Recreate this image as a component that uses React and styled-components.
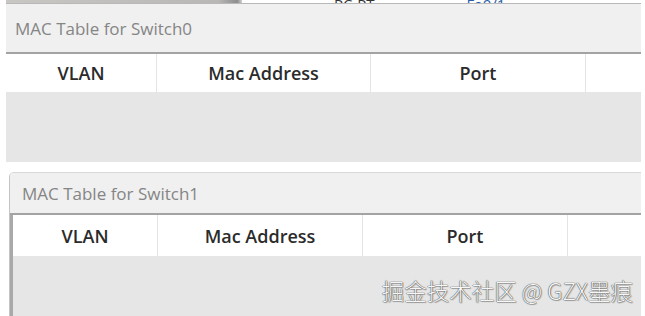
import React from "react";
import styled, { createGlobalStyle } from "styled-components";

const GlobalStyle = createGlobalStyle`
  html, body {
    margin: 0;
    padding: 0;
    background: #ffffff;
  }
  body {
    font-family: "Open Sans", "Noto Sans", "Noto Sans CJK SC", sans-serif;
    width: 645px;
    height: 316px;
    overflow: hidden;
  }
`;

const Page = styled.div`
  display: flex;
  flex-direction: column;
  width: 645px;
  height: 316px;
  overflow: hidden;
`;

const TopStrip = styled.div`
  display: flex;
  align-items: flex-end;
  height: 5px;
  overflow: hidden;
  padding-left: 6px;
`;

const Scrollbar = styled.div`
  width: 236px;
  height: 4px;
  background: linear-gradient(to right, #c9c7c4, #b9b7b5 90%, #8e8e8e 98%, #d0d0d0);
`;

const Cut = styled.span`
  font-family: "Open Sans", sans-serif;
  font-size: 15px;
  line-height: 15px;
  margin-bottom: -9px;
  margin-left: ${p => p.$left}px;
  color: ${p => p.$color};
  white-space: nowrap;
`;

const Panel = styled.div`
  display: flex;
  flex-direction: column;
  margin-left: ${p => p.$left}px;
  margin-right: 4px;
  margin-top: ${p => p.$top}px;
  height: ${p => p.$height}px;
  flex-shrink: 0;
  border-left: ${p => (p.$framed ? "1px solid #c4c4c4" : "none")};
  border-top: ${p => (p.$framed ? "1px solid #d8d8d8" : "1px solid #b8b8b8")};
  border-top-left-radius: ${p => (p.$framed ? "5px" : "0")};
  overflow: hidden;
`;

const Title = styled.div`
  height: ${p => p.$height}px;
  display: flex;
  align-items: center;
  padding-left: ${p => p.$pad}px;
  background: #f0f0f0;
  color: #858585;
  font-size: 17px;
  border-bottom: 2px solid #a3a3a3;
  flex-shrink: 0;
`;

const Body = styled.div`
  position: relative;
  flex: 1;
  display: flex;
  flex-direction: column;
  border-left: ${p => (p.$framed ? "3px solid #a9a9a9" : "none")};
  background: #e6e6e6;
`;

const HeaderRow = styled.div`
  display: grid;
  grid-template-columns: ${p => p.$cols};
  height: ${p => p.$height}px;
  background: #ffffff;
  flex-shrink: 0;
`;

const HeaderCell = styled.div`
  display: flex;
  align-items: center;
  justify-content: center;
  border-right: 1px solid #e4e4e4;
  color: #2b2b2b;
  font-size: 18px;
  font-weight: 600;
  &:last-child {
    border-right: none;
  }
`;

const Watermark = styled.div`
  position: absolute;
  right: 8px;
  bottom: 10px;
  font-family: "Noto Sans CJK SC", "Open Sans", sans-serif;
  font-size: 22.5px;
  font-weight: 300;
  color: #f6f6f6;
  text-shadow: 0 0 1px #444, 0 0 1px #444, 1px 1px 1px rgba(0, 0, 0, 0.25);
  white-space: nowrap;
`;

const columns = ["VLAN", "Mac Address", "Port", ""];

const MacTable = ({ name, left, top, height, framed, titleHeight, titlePad, cols, headerHeight, children }) => (
  <Panel $left={left} $top={top} $height={height} $framed={framed}>
    <Title $height={titleHeight} $pad={titlePad}>MAC Table for {name}</Title>
    <Body $framed={framed}>
      <HeaderRow $cols={cols} $height={headerHeight}>
        {columns.map((c, i) => (
          <HeaderCell key={i}>{c}</HeaderCell>
        ))}
      </HeaderRow>
      {children}
    </Body>
  </Panel>
);

export default function App() {
  return (
    <Page>
      <GlobalStyle />
      <TopStrip>
        <Scrollbar />
        <Cut $left={92} $color="#333">PC-PT</Cut>
        <Cut $left={92} $color="#2a5ea8">Fa0/1</Cut>
      </TopStrip>
      <MacTable
        name="Switch0"
        left={6}
        top={0}
        height={158}
        titleHeight={48}
        titlePad={9}
        cols="151px 214px 215px 1fr"
        headerHeight={38}
      />
      <MacTable
        name="Switch1"
        left={9}
        top={10}
        height={143}
        framed
        titleHeight={40}
        titlePad={12}
        cols="145px 205px 205px 1fr"
        headerHeight={41}
      >
        <Watermark>掘金技术社区 @ GZX墨痕</Watermark>
      </MacTable>
    </Page>
  );
}
